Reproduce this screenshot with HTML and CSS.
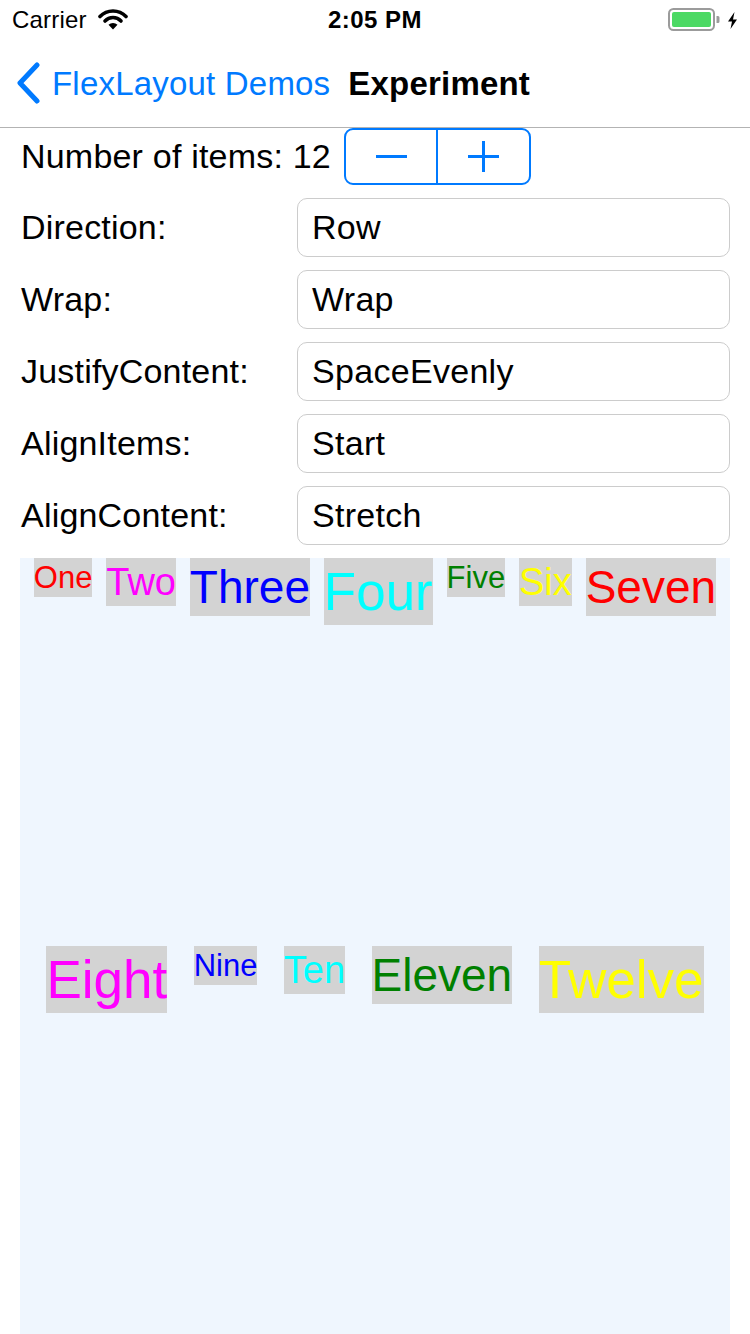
FILE: index.html
```html
<!DOCTYPE html>
<html lang="en">
<head>
<meta charset="utf-8">
<title>Experiment</title>
<link rel="stylesheet" href="styles.css">
</head>
<body>
<div class="screen">
  <div class="status-bar">
    <div class="status-left">
      <span class="carrier">Carrier</span>
      <svg class="wifi" width="30" height="22" viewBox="0 0 30 22">
        <path d="M2 8.5 A18 18 0 0 1 28 8.5" fill="none" stroke="#000" stroke-width="3.6" stroke-linecap="round"/>
        <path d="M7 13 A11 11 0 0 1 23 13" fill="none" stroke="#000" stroke-width="3.6" stroke-linecap="round"/>
        <path d="M15 21.5 L10.5 16.8 A6.5 6.5 0 0 1 19.5 16.8 Z" fill="#000"/>
      </svg>
    </div>
    <div class="status-time">2:05 PM</div>
    <div class="status-right">
      <svg class="battery" width="54" height="24" viewBox="0 0 54 24">
        <rect x="1" y="1" width="45" height="21" rx="4.5" fill="none" stroke="#9b9b9b" stroke-width="2"/>
        <rect x="4" y="4" width="39" height="15" rx="2" fill="#4cd964"/>
        <path d="M48.5 8 h1.5 a1.5 1.5 0 0 1 1.5 1.5 v4 a1.5 1.5 0 0 1 -1.5 1.5 h-1.5 z" fill="#9b9b9b"/>
      </svg>
      <svg class="bolt" width="11" height="17" viewBox="0 0 11 17">
        <path d="M7.5 0 L1 9.5 H5 L3.5 17 L10 7.5 H6 Z" fill="#000"/>
      </svg>
    </div>
  </div>

  <div class="nav-bar">
    <div class="nav-back">
      <svg class="chevron" width="26" height="42" viewBox="0 0 26 42">
        <path d="M21 3 L4 21 L21 39" fill="none" stroke="#007aff" stroke-width="5" stroke-linecap="round" stroke-linejoin="round"/>
      </svg>
      <span class="back-label">FlexLayout Demos</span>
    </div>
    <div class="nav-title">Experiment</div>
  </div>

  <div class="controls">
    <div class="count-row">
      <span class="label">Number of items: 12</span>
      <div class="stepper">
        <div class="step-btn">
          <span class="minus"></span>
        </div>
        <div class="step-btn">
          <span class="plus"></span>
        </div>
      </div>
    </div>
    <div class="field-row">
      <span class="label">Direction:</span>
      <div class="field">Row</div>
    </div>
    <div class="field-row">
      <span class="label">Wrap:</span>
      <div class="field">Wrap</div>
    </div>
    <div class="field-row">
      <span class="label">JustifyContent:</span>
      <div class="field">SpaceEvenly</div>
    </div>
    <div class="field-row">
      <span class="label">AlignItems:</span>
      <div class="field">Start</div>
    </div>
    <div class="field-row">
      <span class="label">AlignContent:</span>
      <div class="field">Stretch</div>
    </div>
  </div>

  <div class="demo">
    <span class="item s1 red">One</span>
    <span class="item s2 magenta">Two</span>
    <span class="item s3 blue">Three</span>
    <span class="item s4 cyan">Four</span>
    <span class="item s1 green">Five</span>
    <span class="item s2 yellow">Six</span>
    <span class="item s3 red">Seven</span>
    <span class="item s4 magenta">Eight</span>
    <span class="item s1 blue">Nine</span>
    <span class="item s2 cyan">Ten</span>
    <span class="item s3 green">Eleven</span>
    <span class="item s4 yellow">Twelve</span>
  </div>
</div>
</body>
</html>
```

FILE: styles.css
```css
* {
  box-sizing: border-box;
}

html, body {
  margin: 0;
  padding: 0;
  background: #ffffff;
}

body {
  font-family: "Liberation Sans", Arial, sans-serif;
  color: #000;
}

.screen {
  width: 750px;
  height: 1334px;
  overflow: hidden;
  display: flex;
  flex-direction: column;
}

/* status bar */
.status-bar {
  height: 40px;
  display: flex;
  align-items: center;
  justify-content: space-between;
  padding: 0 12px 0 12px;
  position: relative;
}

.status-left {
  display: flex;
  align-items: center;
  gap: 11px;
  font-size: 24px;
}

.carrier {
  letter-spacing: 0.2px;
}

.wifi {
  margin-top: -2px;
}

.status-time {
  position: absolute;
  left: 0;
  right: 0;
  text-align: center;
  font-size: 24px;
  font-weight: bold;
  letter-spacing: 0.5px;
  pointer-events: none;
}

.status-right {
  display: flex;
  align-items: center;
  gap: 5px;
}

/* nav bar */
.nav-bar {
  height: 88px;
  display: flex;
  align-items: center;
  border-bottom: 1px solid #b3b3b3;
  padding-left: 16px;
  gap: 18px;
}

.nav-back {
  display: flex;
  align-items: center;
  gap: 10px;
  color: #007aff;
  font-size: 33px;
}

.back-label {
  letter-spacing: 0.2px;
}

.chevron {
  margin-top: -1px;
}

.nav-title {
  font-size: 33px;
  font-weight: bold;
  letter-spacing: 0.2px;
}

/* controls */
.controls {
  display: flex;
  flex-direction: column;
  gap: 13px;
  padding: 0 20px 0 21px;
}

.label {
  font-size: 34px;
  letter-spacing: 0.2px;
}

.count-row {
  display: flex;
  align-items: center;
  gap: 13px;
  height: 57px;
}

.stepper {
  display: flex;
  width: 187px;
  height: 57px;
  border: 2px solid #007aff;
  border-radius: 9px;
}

.step-btn {
  flex: 1;
  display: flex;
  align-items: center;
  justify-content: center;
}

.step-btn + .step-btn {
  border-left: 2px solid #007aff;
}

.minus {
  display: block;
  width: 31px;
  height: 3px;
  background: #007aff;
}

.plus {
  display: block;
  width: 31px;
  height: 31px;
  position: relative;
}

.plus::before,
.plus::after {
  content: "";
  position: absolute;
  background: #007aff;
}

.plus::before {
  left: 0;
  right: 0;
  top: 14px;
  height: 3px;
}

.plus::after {
  top: 0;
  bottom: 0;
  left: 14px;
  width: 3px;
}

.field-row {
  display: grid;
  grid-template-columns: 276px 1fr;
  align-items: center;
  height: 59px;
}

.field {
  height: 59px;
  border: 1px solid #cccccc;
  border-radius: 10px;
  display: flex;
  align-items: center;
  padding-left: 14px;
  font-size: 34px;
  letter-spacing: 0.3px;
}

/* flex demo */
.demo {
  margin: 13px 20px 0 20px;
  height: 776px;
  background: #eff6fe;
  display: flex;
  flex-wrap: wrap;
  justify-content: space-evenly;
  align-items: flex-start;
  align-content: stretch;
}

.item {
  background: #d3d3d3;
  font-family: "Liberation Sans", Arial, sans-serif;
  white-space: nowrap;
}

.s1 { font-size: 31px; line-height: 39px; }
.s2 { font-size: 38px; line-height: 48px; }
.s3 { font-size: 46px; line-height: 58px; }
.s4 { font-size: 53px; line-height: 67px; }

.red { color: #ff0000; }
.magenta { color: #ff00ff; }
.blue { color: #0000ff; }
.cyan { color: #00ffff; }
.green { color: #008000; }
.yellow { color: #ffff00; }
```
